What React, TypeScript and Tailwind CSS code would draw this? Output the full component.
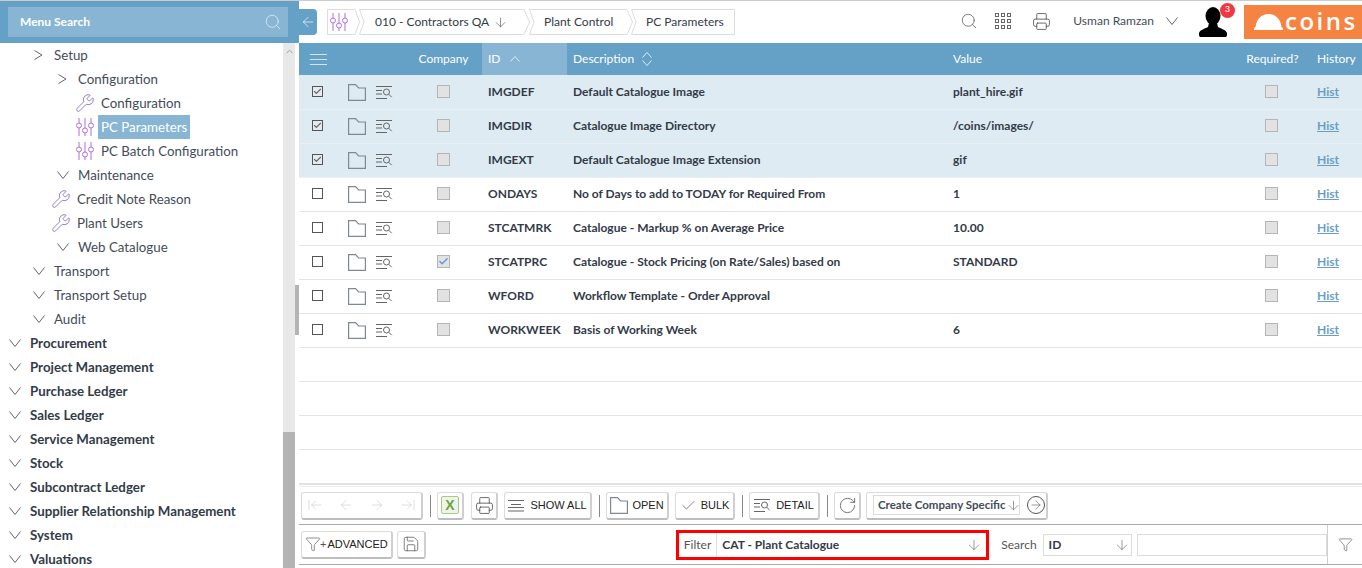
import type { ReactNode } from 'react';
import { ArrowLeft, ArrowRight, ArrowDown, ChevronUp, Search, Printer, Wrench, RotateCw, Save, ArrowLeftToLine, ArrowRightToLine, Funnel, Check } from 'lucide-react';

// Small hand drawn icons
function Sliders({ className = '' }: { className?: string }) {
  return (
    <svg width="18" height="20" viewBox="0 0 18 20" fill="none" stroke="currentColor" strokeWidth="1" className={className}>
      <path d="M3 1v5M3 11v8M9 1v10M9 16v3M15 1v5M15 11v8" />
      <circle cx="3" cy="8.5" r="2.5" />
      <circle cx="9" cy="13.5" r="2.5" />
      <circle cx="15" cy="8.5" r="2.5" />
    </svg>
  );
}

function Folder() {
  return (
    <svg width="18" height="17" viewBox="0 0 18 17" fill="none" stroke="#808890" strokeWidth="1.2">
      <path d="M.6 16.400V.6h7l3 3.400h6.800v12.400z" />
    </svg>
  );
}

function DetailIcon() {
  return (
    <svg width="17" height="13" viewBox="0 0 17 13" fill="none" stroke="#666" strokeWidth="1">
      <path d="M0 .5h16M0 4.500h6M0 8h6M0 12.500h11" />
      <circle cx="10.500" cy="6" r="3" />
      <path d="M12.700 8.200l3 3" />
    </svg>
  );
}

function ListIcon({ className = '' }: { className?: string }) {
  return (
    <svg width="17" height="13" viewBox="0 0 17 13" fill="none" stroke="currentColor" strokeWidth="1" className={className}>
      <path d="M0 1.500h17M0 6.500h17M0 11.500h17" />
    </svg>
  );
}

function ShowAllIcon() {
  return (
    <svg width="17" height="13" viewBox="0 0 17 13" fill="none" stroke="#666" strokeWidth="1">
      <path d="M0 1.500h16M3 5.500h10M0 8.500h16M0 12h16" />
    </svg>
  );
}

function GridDots() {
  return (
    <svg width="16" height="16" viewBox="0 0 16 16" fill="none" stroke="#666" strokeWidth="1">
      {[0, 6, 12].map((y) => [0, 6, 12].map((x) => <rect key={`${x}-${y}`} x={x + 0.5} y={y + 0.5} width="3" height="3" />))}
    </svg>
  );
}

function Avatar() {
  return (
    <svg width="28" height="30" viewBox="0 0 28 30" fill="#000">
      <ellipse cx="14" cy="9" rx="7.500" ry="9" />
      <path d="M10 16h8l1 4c4 2 8 3 9 6 .3 1.500 0 3-1 4H1c-1-1-1.300-2.500-1-4 1-3 5-4 9-6z" />
    </svg>
  );
}

function Hardhat() {
  return (
    <svg width="29" height="16" viewBox="0 0 29 16" fill="#fff">
      <path d="M0 16c-.2-1.500.4-2.500 1.500-3 1-8 6-13 13-13s12 5 13 13c1.100.5 1.700 1.500 1.500 3z" />
    </svg>
  );
}

function Excel() {
  return (
    <span className="w-[18px] h-[18px] rounded-[2px] border border-[#a8c98f] bg-[#eef5e8] flex items-center justify-center text-[#6aa53a] text-[14px] font-bold font-['Liberation_Sans',sans-serif] leading-none">X</span>
  );
}

function VChevron({ wide = 12 }: { wide?: number }) {
  return (
    <svg width={wide} height="8" viewBox="0 0 12 8" fill="none" stroke="#666" strokeWidth="1" preserveAspectRatio="none">
      <path d="M.5.500L6 7.500 11.500.500" />
    </svg>
  );
}

function RightChevron() {
  return (
    <svg width="9" height="10" viewBox="0 0 9 10" fill="none" stroke="#666" strokeWidth="1">
      <path d="M.5.500L8 5 .5 9.500" />
    </svg>
  );
}

function SortBoth() {
  return (
    <svg width="10" height="14" viewBox="0 0 10 14" fill="none" stroke="#ddeaf3" strokeWidth="1">
      <path d="M.5 5.500L5 .5l4.500 5M.5 8.500L5 13.500l4.500-5" />
    </svg>
  );
}

function SortUp() {
  return (
    <svg width="10" height="6" viewBox="0 0 10 6" fill="none" stroke="#ddeaf3" strokeWidth="1">
      <path d="M.5 5.500L5 .5l4.500 5" />
    </svg>
  );
}

// Sidebar tree data: indent in px, chevron kind or icon
type Node = { label: string; x: number; icon: 'right' | 'down' | 'wrench' | 'sliders'; bold?: boolean; active?: boolean };

const tree: Node[] = [
  { label: 'Setup', x: 30, icon: 'right' },
  { label: 'Configuration', x: 54, icon: 'right' },
  { label: 'Configuration', x: 76, icon: 'wrench' },
  { label: 'PC Parameters', x: 76, icon: 'sliders', active: true },
  { label: 'PC Batch Configuration', x: 76, icon: 'sliders' },
  { label: 'Maintenance', x: 54, icon: 'down' },
  { label: 'Credit Note Reason', x: 52, icon: 'wrench' },
  { label: 'Plant Users', x: 52, icon: 'wrench' },
  { label: 'Web Catalogue', x: 54, icon: 'down' },
  { label: 'Transport', x: 30, icon: 'down' },
  { label: 'Transport Setup', x: 30, icon: 'down' },
  { label: 'Audit', x: 30, icon: 'down' },
  { label: 'Procurement', x: 6, icon: 'down', bold: true },
  { label: 'Project Management', x: 6, icon: 'down', bold: true },
  { label: 'Purchase Ledger', x: 6, icon: 'down', bold: true },
  { label: 'Sales Ledger', x: 6, icon: 'down', bold: true },
  { label: 'Service Management', x: 6, icon: 'down', bold: true },
  { label: 'Stock', x: 6, icon: 'down', bold: true },
  { label: 'Subcontract Ledger', x: 6, icon: 'down', bold: true },
  { label: 'Supplier Relationship Management', x: 6, icon: 'down', bold: true },
  { label: 'System', x: 6, icon: 'down', bold: true },
  { label: 'Valuations', x: 6, icon: 'down', bold: true },
];

function TreeRow({ node }: { node: Node }) {
  const { icon } = node;
  const isChevron = icon === 'right' || icon === 'down';
  return (
    <div className="h-6 flex items-center shrink-0" style={{ paddingLeft: node.x }}>
      <span className="w-[17px] flex items-center justify-center shrink-0 text-[#666]">
        {icon === 'right' && <RightChevron />}
        {icon === 'down' && <VChevron />}
        {icon === 'wrench' && <Wrench size={20} strokeWidth={1} className="text-[#7e63bd] shrink-0" />}
        {icon === 'sliders' && <Sliders className="text-[#b06fd6] shrink-0" />}
      </span>
      <span
        className={
          (isChevron ? 'ml-[4px] ' : 'ml-[5px] ') +
          'pl-[3px] pr-[3px] h-6 leading-6 whitespace-nowrap ' +
          (node.bold ? 'font-bold text-[#333b48] ' : 'text-[#444c58] ') +
          (node.active ? 'bg-[#88b5d3] text-white' : '')
        }
      >
        {node.label}
      </span>
    </div>
  );
}

const rows = [
  { id: 'IMGDEF', desc: 'Default Catalogue Image', value: 'plant_hire.gif', selected: true },
  { id: 'IMGDIR', desc: 'Catalogue Image Directory', value: '/coins/images/', selected: true },
  { id: 'IMGEXT', desc: 'Default Catalogue Image Extension', value: 'gif', selected: true },
  { id: 'ONDAYS', desc: 'No of Days to add to TODAY for Required From', value: '1' },
  { id: 'STCATMRK', desc: 'Catalogue - Markup % on Average Price', value: '10.00' },
  { id: 'STCATPRC', desc: 'Catalogue - Stock Pricing (on Rate/Sales) based on', value: 'STANDARD', company: true },
  { id: 'WFORD', desc: 'Workflow Template - Order Approval', value: '' },
  { id: 'WORKWEEK', desc: 'Basis of Working Week', value: '6' },
];

const gridCols = 'grid grid-cols-[106px_77px_85px_378px_293px_72px_52px]';

function CheckBox({ checked }: { checked?: boolean }) {
  return (
    <span className={'w-[11px] h-[11px] -mt-[2px] border border-[#555] flex items-center justify-center ' + (checked ? 'bg-[#e4eaee]' : 'bg-white')}>
      {checked && <Check size={9} strokeWidth={3} className="text-[#666]" />}
    </span>
  );
}

function GreyBox({ checked }: { checked?: boolean }) {
  return (
    <span className="w-[13px] h-[13px] -mt-[2px] border border-[#b5b5b5] bg-[#e2e2e2] flex items-center justify-center">
      {checked && <Check size={11} strokeWidth={3} className="text-[#5f9ad2]" />}
    </span>
  );
}

function TableRow({ row }: { row: (typeof rows)[number] }) {
  return (
    <div className={gridCols + ' h-[34px] pb-[1px] items-center border-b text-[12px] font-bold text-[#333b48] ' + (row.selected ? 'bg-[#deebf2] border-[#e9f0f5]' : 'bg-white border-[#e4e4e4]')}>
      <div className="flex items-center pl-[13px]">
        <CheckBox checked={row.selected} />
        <span className="ml-[25px]"><Folder /></span>
        <span className="ml-[10px]"><DetailIcon /></span>
      </div>
      <div className="flex justify-center items-center"><GreyBox checked={row.company} /></div>
      <div className="pl-[6px] whitespace-nowrap">{row.id}</div>
      <div className="pl-[6px] whitespace-nowrap">{row.desc}</div>
      <div className="pl-2 whitespace-nowrap">{row.value}</div>
      <div className="flex justify-center items-center pr-[5px]"><GreyBox /></div>
      <div className="pl-[7px] text-[#6b9ec4] underline">Hist</div>
    </div>
  );
}

function ToolButton({ children, className = '' }: { children: ReactNode; className?: string }) {
  return (
    <button className={"h-[28px] flex items-center justify-center rounded-[3px] border border-[#dcdcdc] border-b-2 border-r-2 border-b-[#bdbdbd] border-r-[#cfcfcf] bg-white text-[11px] text-[#222] font-['Liberation_Sans',sans-serif] " + className}>
      {children}
    </button>
  );
}

function Divider() {
  return <span className="w-px h-[22px] bg-[#888] ml-[7px] mr-[6px]" />;
}

function Crumb({ children, width, path, className = '' }: { children: ReactNode; width: number; path: string; className?: string }) {
  // breadcrumb step, the outline is only a decoration behind the text
  return (
    <span className={'relative h-[26px] flex items-center shrink-0 ' + className} style={{ width }}>
      <svg width={width} height="26" viewBox={`0 0 ${width} 26`} fill="none" stroke="#dcdcdc" className="absolute left-0 top-0">
        <path d={path} />
      </svg>
      <span className="relative flex items-center whitespace-nowrap">{children}</span>
    </span>
  );
}

export default function App() {
  return (
    <div className="w-[1362px] h-[568px] overflow-hidden flex flex-col bg-white font-['Lato',sans-serif] text-[13.3px] border-t border-[#cccccc]">
      <div className="flex flex-1 min-h-0">
        {/* Sidebar */}
        <aside className="w-[299px] shrink-0 flex flex-col">
          <div className="h-[42px] bg-[#65a0c6] flex items-center pl-2 pr-[11px] pb-[1px] shrink-0">
            <div className="w-[280px] h-[30px] bg-[#88b5d3] flex items-center justify-between pl-3 pr-[6px] text-white font-bold text-[12px]">
              <span>Menu Search</span>
              <Search size={18} strokeWidth={1} className="text-[#e4eff6]" />
            </div>
          </div>
          <div className="flex flex-1 min-h-0">
            <div className="w-[283px] flex flex-col overflow-hidden">
              {tree.map((n, i) => (
                <TreeRow key={i} node={n} />
              ))}
            </div>
            <div className="w-3 bg-[#e8e8e8] flex flex-col">
              <ChevronUp size={11} strokeWidth={2} className="text-[#999] mt-[3px] ml-[1px]" />
              <div className="flex-1" />
              <div className="h-[136px] bg-[#b4b4b4]" />
            </div>
            <div className="w-1 bg-white flex flex-col">
              <div className="h-[242px] shrink-0" />
              <div className="h-[50px] bg-[#b4b4b4]" />
            </div>
          </div>
        </aside>

        {/* Main */}
        <main className="w-[1063px] flex flex-col min-h-0">
          <header className="h-[42px] flex items-center shrink-0">
            <button className="w-[18px] h-[26px] bg-[#65a0c6] rounded-r-[4px] flex items-center justify-center text-white">
              <ArrowLeft size={16} strokeWidth={1} />
            </button>
            {/* Breadcrumb */}
            <div className="ml-[10px] flex items-center text-[12px] text-[#333b48]">
              <Crumb width={33} path="M.5.500H28L32.500 13 28 25.500H.5z" className="pl-[3px] text-[#b06fd6]"><Sliders /></Crumb>
              <Crumb width={171} path="M.5.500H165L170.500 13 165 25.500H.5L5 13z" className="-ml-px pl-[16px]">
                010 - Contractors QA
                <ArrowDown size={15} strokeWidth={1} className="ml-[4px] text-[#555]" />
              </Crumb>
              <Crumb width={104} path="M.5.500H98L103.500 13 98 25.500H.5L5 13z" className="-ml-px pl-[15px]">Plant Control</Crumb>
              <Crumb width={104} path="M.5.500H103.500V25.500H.5L5 13z" className="-ml-[2px] pl-[15px]">PC Parameters</Crumb>
            </div>
            <div className="ml-auto flex items-center mb-[2px]">
              <Search size={18} strokeWidth={1} className="text-[#555]" />
              <span className="ml-[17px]"><GridDots /></span>
              <Printer size={19} strokeWidth={1} className="ml-[21px] text-[#444]" />
              <span className="ml-[22px] text-[12px] text-[#444c58] whitespace-nowrap">Usman Ramzan</span>
              <span className="ml-[12px]"><VChevron /></span>
            </div>
            <div className="relative ml-[21px] mb-[1px]">
              <Avatar />
              <span className="absolute -top-[4px] -right-[8px] w-[15px] h-[15px] rounded-full bg-[#f1373f] text-white text-[9px] flex items-center justify-center font-['Liberation_Sans',sans-serif]">3</span>
            </div>
            <div className="ml-[17px] w-[118px] h-[34px] bg-[#f58442] flex items-center pl-[10px] text-white">
              <Hardhat />
              <span className="ml-[2px] -mt-[2px] text-[24px] font-semibold leading-none tracking-[2.5px] font-['Open_Sans',sans-serif]">coins</span>
            </div>
          </header>

          {/* Table */}
          <div className={gridCols + ' h-[32px] bg-[#65a0c6] text-white text-[12px] items-center shrink-0'}>
            <div className="pl-[11px]"><ListIcon className="text-[#d5e5f0]" /></div>
            <div className="text-center">Company</div>
            <div className="h-full bg-[#88b5d3] pl-[6px] flex items-center gap-[9px]">ID <SortUp /></div>
            <div className="pl-[6px] flex items-center gap-[8px]">Description <SortBoth /></div>
            <div className="pl-2">Value</div>
            <div className="text-center pr-[3px]">Required?</div>
            <div className="pl-[7px]">History</div>
          </div>
          <div className="flex-1 min-h-0 overflow-hidden">
            <div className="h-px bg-[#deebf2]" />
            {rows.map((r) => (
              <TableRow key={r.id} row={r} />
            ))}
            <div className="h-[34px] border-b border-[#e4e4e4]" />
            <div className="h-[34px] border-b border-[#e4e4e4]" />
            <div className="h-[34px] border-b border-[#e4e4e4]" />
          </div>

          {/* Toolbar */}
          <div className="h-[42px] shrink-0 border-t-2 border-t-[#e2e2e2] border-b border-b-[#aaaaaa] flex flex-col">
            <div className="h-px mt-px bg-[#eeeeee] shrink-0" />
            <div className="flex-1 flex items-center pl-[2px]">
              <ToolButton className="w-[122px] gap-[15px] text-[#cfcfcf]">
                <ArrowLeftToLine size={16} strokeWidth={1} />
                <ArrowLeft size={16} strokeWidth={1} />
                <ArrowRight size={16} strokeWidth={1} />
                <ArrowRightToLine size={16} strokeWidth={1} />
              </ToolButton>
              <Divider />
              <ToolButton className="w-[27px]"><Excel /></ToolButton>
              <span className="w-[7px]" />
              <ToolButton className="w-[27px] text-[#444]"><Printer size={19} strokeWidth={1} /></ToolButton>
              <span className="w-[6px]" />
              <ToolButton className="w-[88px] gap-[5px]"><ShowAllIcon />SHOW ALL</ToolButton>
              <Divider />
              <ToolButton className="w-[63px] gap-[4px]"><Folder />OPEN</ToolButton>
              <span className="w-[6px]" />
              <ToolButton className="w-[60px] gap-[4px]"><Check size={17} strokeWidth={1} className="text-[#555]" />BULK</ToolButton>
              <Divider />
              <ToolButton className="w-[71px] gap-[5px]"><DetailIcon />DETAIL</ToolButton>
              <Divider />
              <ToolButton className="w-[27px] text-[#555]"><RotateCw size={19} strokeWidth={1} /></ToolButton>
              <span className="w-[5px]" />
              <ToolButton className="w-[182px] pl-[6px] justify-start">
                <span className="w-[147px] h-[20px] border border-[#dcdcdc] flex items-center justify-between pl-[4px] pr-[2px] text-[11.5px] font-bold font-['Lato',sans-serif] text-[#444c58] whitespace-nowrap">
                  Create Company Specific
                  <ArrowDown size={15} strokeWidth={1} className="shrink-0 text-[#666]" />
                </span>
                <span className="ml-[7px] w-[18px] h-[18px] rounded-full border border-[#555] flex items-center justify-center text-[#555] shrink-0"><ArrowRight size={14} strokeWidth={1} /></span>
              </ToolButton>
            </div>
          </div>

          {/* Filter bar */}
          <div className="h-[40px] shrink-0 border-b border-b-[#aaaaaa] flex items-center pl-[2px] mb-[3px]">
            <ToolButton className="w-[92px] gap-[1px]">
              <Funnel size={16} strokeWidth={1} className="text-[#555]" />
              <span className="-ml-[2px] text-[#555]">+</span>
              ADVANCED
            </ToolButton>
            <span className="w-[4px]" />
            <ToolButton className="w-[29px] text-[#555]"><Save size={18} strokeWidth={1} /></ToolButton>
            <div className="ml-[250px] mt-[1px] w-[314px] h-[30px] border-[3px] border-[#ff0000] flex items-center pl-[5px] text-[#555] text-[12px]">
              <span>Filter</span>
              <span className="ml-[5px] w-[269px] h-[24px] border-l border-[#e0e0e0] flex items-center justify-between pl-[5px] pr-[3px] font-bold text-[#333b48]">
                CAT - Plant Catalogue
                <ArrowDown size={16} strokeWidth={1} className="text-[#666]" />
              </span>
            </div>
            <span className="ml-[12px] text-[12px] text-[#555]">Search</span>
            <div className="ml-[6px] w-[90px] h-[22px] border border-[#dcdcdc] flex items-center justify-between pl-[5px] pr-[1px] font-bold text-[12px] text-[#333b48]">
              ID
              <ArrowDown size={16} strokeWidth={1} className="text-[#666]" />
            </div>
            <div className="ml-[5px] w-[190px] h-[22px] border border-[#dcdcdc]" />
            <div className="h-full w-[35px] border-l border-[#cfcfcf] flex items-center justify-center text-[#555]">
              <Funnel size={15} strokeWidth={1} />
            </div>
          </div>
        </main>
      </div>
    </div>
  );
}
